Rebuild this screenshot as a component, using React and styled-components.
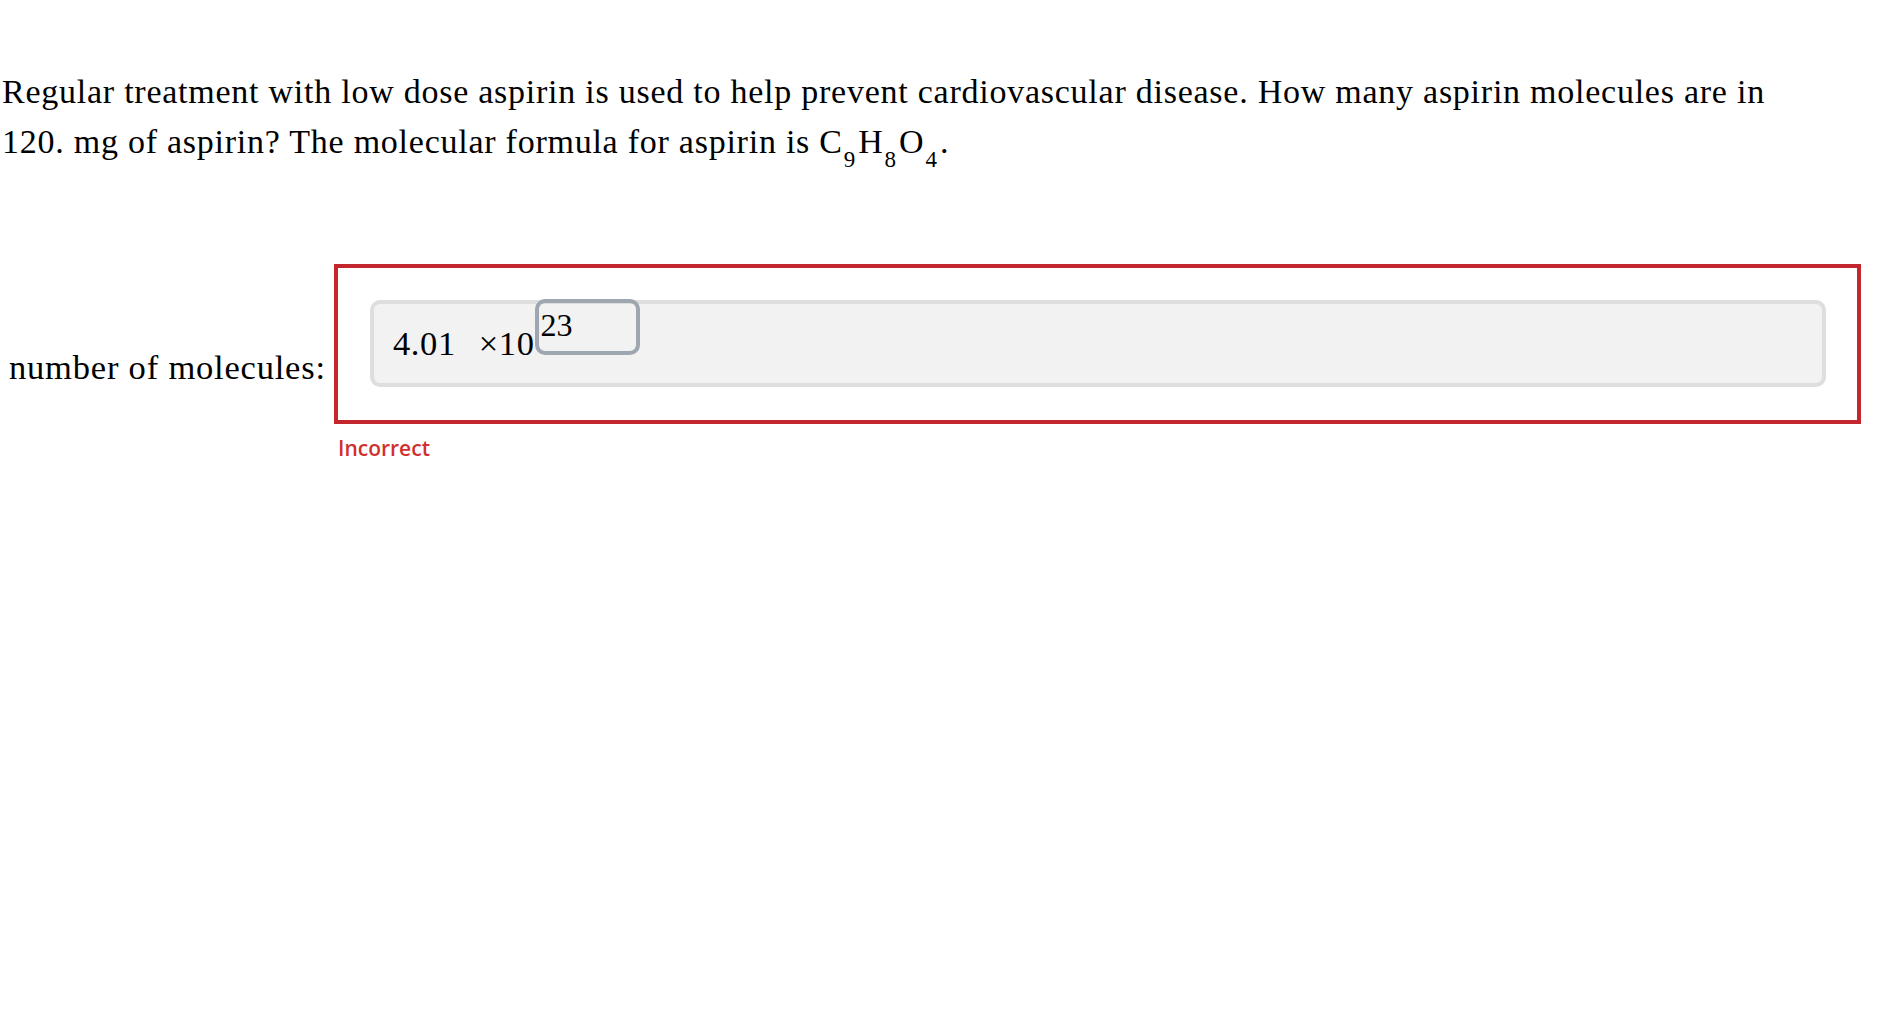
import React from "react";
import styled, { createGlobalStyle } from "styled-components";

const Global = createGlobalStyle`
  html, body { margin: 0; padding: 0; background: #ffffff; }
  body { font-family: "Liberation Serif", "Times New Roman", serif; color: #000; }
`;

const Page = styled.div`
  width: 1888px;
  min-height: 1016px;
  box-sizing: border-box;
  padding-top: 67px;
`;

const Question = styled.p`
  margin: 0;
  padding-left: 2px;
  max-width: 1800px;
  font-size: 34px;
  letter-spacing: 0.75px;
  line-height: 50px;
`;

const Sub = styled.sub`
  font-size: 23px;
  line-height: 0;
  vertical-align: -14px;
  margin: 0 3px 0 1px;
  letter-spacing: 0;
`;

const AnswerRow = styled.div`
  display: flex;
  align-items: flex-start;
  margin-top: 97px;
`;

const Label = styled.label`
  width: 334px;
  box-sizing: border-box;
  padding: 84px 0 0 9px;
  font-size: 34.5px;
  letter-spacing: 0.8px;
  line-height: normal;
  white-space: nowrap;
`;

const Feedback = styled.div`
  display: flex;
  flex-direction: column;
`;

const FieldFrame = styled.div`
  width: 1527px;
  height: 160px;
  box-sizing: border-box;
  border: 4px solid #c3272d;
  padding: 32px 31px 33px 32px;
`;

const InputShell = styled.div`
  height: 100%;
  box-sizing: border-box;
  border: 4px solid #dedede;
  border-radius: 10px;
  background: #f2f2f2;
  display: flex;
  align-items: flex-start;
  padding: 0 20px 0 19px;
`;

const Value = styled.span`
  padding-top: 20px;
  font-size: 34.5px;
  letter-spacing: 0.6px;
  line-height: normal;
  margin-left: ${(p) => p.$gap || 0}px;
`;

const SupBox = styled.span`
  width: 105px;
  height: 56px;
  box-sizing: border-box;
  margin-top: -5px;
  border: 4px solid #9ea6b0;
  border-radius: 10px;
  padding: 4px 0 0 2px;
  font-size: 32px;
  line-height: normal;
`;

const Verdict = styled.div`
  margin: 10px 0 0 4px;
  font-family: "Open Sans", "Liberation Sans", sans-serif;
  font-weight: 600;
  font-size: 21px;
  color: #d0302e;
`;

export default function App() {
  return (
    <Page>
      <Global />
      <Question>
        Regular treatment with low dose aspirin is used to help prevent cardiovascular disease. How many aspirin
        molecules are in 120. mg of aspirin? The molecular formula for aspirin is C<Sub>9</Sub>H<Sub>8</Sub>O
        <Sub>4</Sub>.
      </Question>
      <AnswerRow>
        <Label>number of molecules:</Label>
        <Feedback>
          <FieldFrame>
            <InputShell>
              <Value>4.01</Value>
              <Value $gap={23}>×10</Value>
              <SupBox>23</SupBox>
            </InputShell>
          </FieldFrame>
          <Verdict>Incorrect</Verdict>
        </Feedback>
      </AnswerRow>
    </Page>
  );
}
